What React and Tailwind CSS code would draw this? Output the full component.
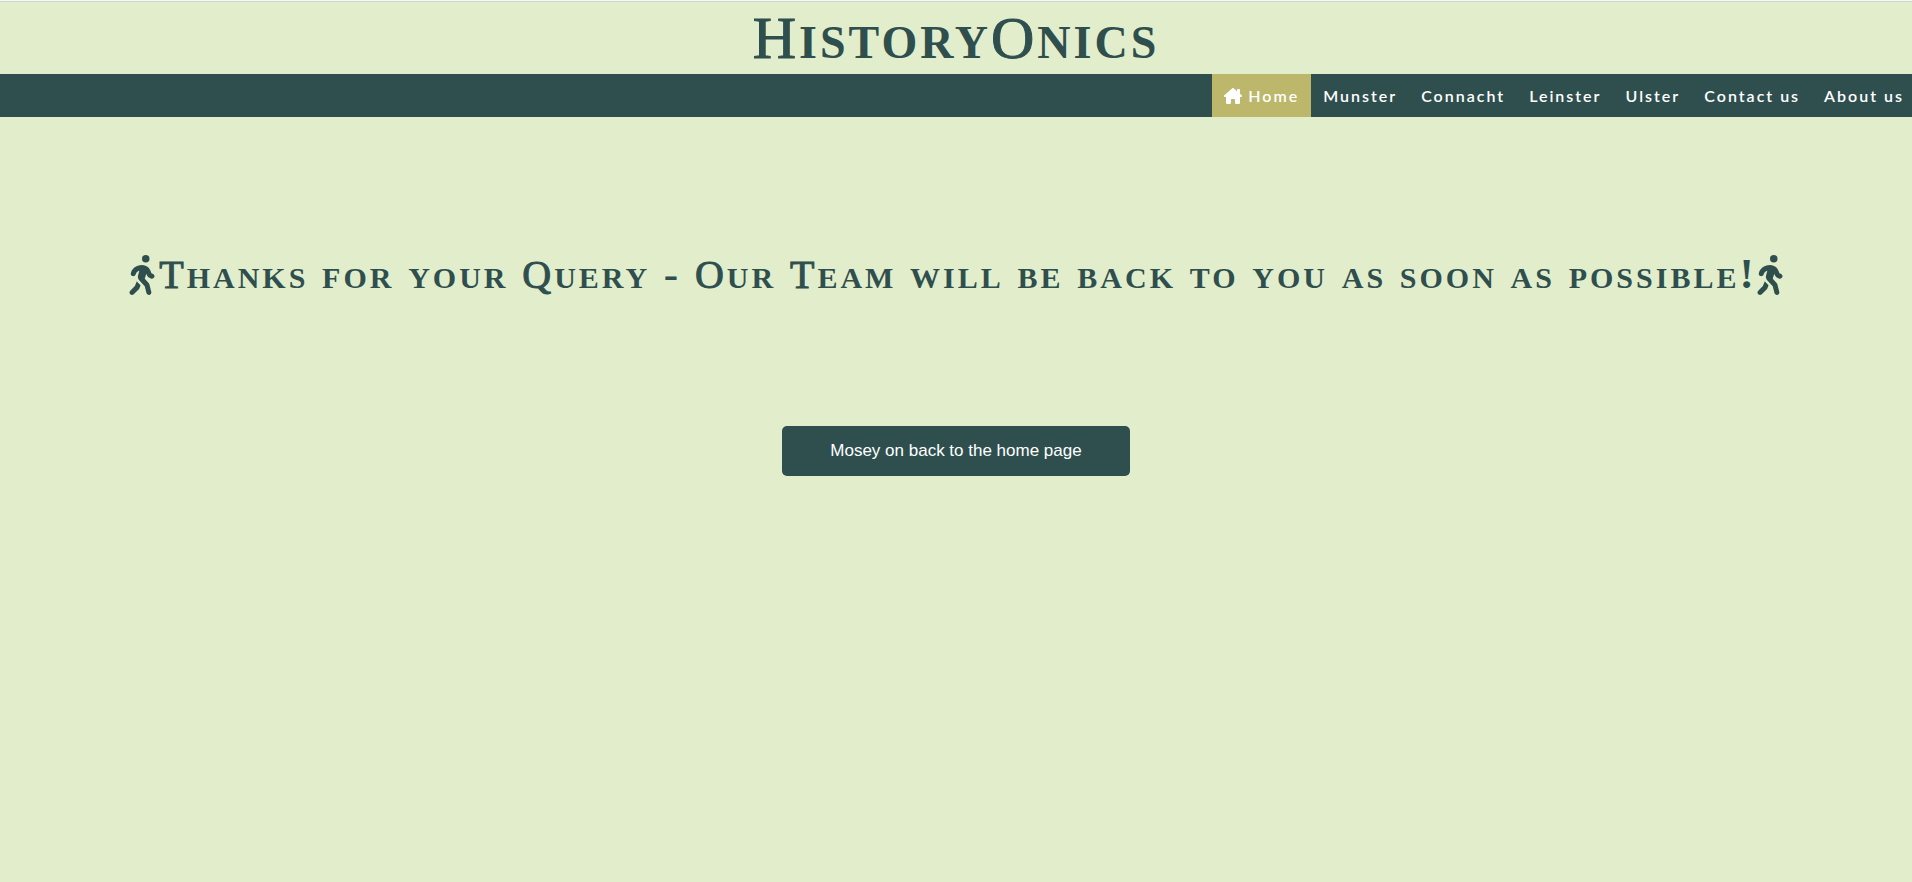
import { FaHouseChimney, FaPersonWalking } from "react-icons/fa6";

const links = ["Munster", "Connacht", "Leinster", "Ulster", "Contact us", "About us"];

// Medium-weight full-size capitals, with everything else as bold small capitals.
function SmallCaps({ text, smallSize }) {
  return (
    <span className="[-webkit-text-stroke:1px_#2f4f4f]">
      {text.split(/([A-Z])/).map((part, i) =>
        /^[A-Z]$/.test(part) ? (
          part
        ) : (
          <span
            key={i}
            className={smallSize + " leading-none font-bold [font-variant-caps:small-caps] [-webkit-text-stroke:0]"}
          >
            {part}
          </span>
        )
      )}
    </span>
  );
}

export default function App() {
  return (
    <div className="min-h-screen border-t border-[#f4f7f2] bg-[#e2eecb] text-[#2f4f4f]">
      <header className="border-t border-[#cfd8d0]">
        <h1 className="text-center font-['Liberation_Serif',serif] text-[60px] leading-[72px] tracking-[3px]">
          <SmallCaps text="HistoryOnics" smallSize="text-[66px]" />
        </h1>
        <nav className="flex flex-wrap justify-end bg-[#2f4f4f] font-['Lato',sans-serif] text-base leading-[43px] font-semibold tracking-[2px] text-white">
          <a href="#home" aria-current="page" className="flex items-center bg-[#bdb76b] px-3">
            <FaHouseChimney className="mr-1.5 h-4 w-[18px]" aria-hidden="true" />
            Home
          </a>
          {links.map((name) => (
            <a key={name} href={"#" + name} className="px-3 last:pr-2">
              {name}
            </a>
          ))}
        </nav>
      </header>
      <main className="flex flex-col items-center pt-[127px]">
        <h2 className="flex items-center justify-center text-center font-['Liberation_Serif',serif] text-[40px] leading-[62px] tracking-[3px]">
          <FaPersonWalking className="mr-1 h-10 w-[26px] shrink-0" aria-hidden="true" />
          <SmallCaps
            text="Thanks for your Query - Our Team will be back to you as soon as possible!"
            smallSize="text-[43px]"
          />
          <FaPersonWalking className="h-10 w-[26px] shrink-0" aria-hidden="true" />
        </h2>
        <button type="button" className="mt-[120px] rounded-[5px] bg-[#2f4f4f] px-12 font-['Liberation_Sans',sans-serif] text-[17px] leading-[50px] text-white">
          Mosey on back to the home page
        </button>
      </main>
    </div>
  );
}
